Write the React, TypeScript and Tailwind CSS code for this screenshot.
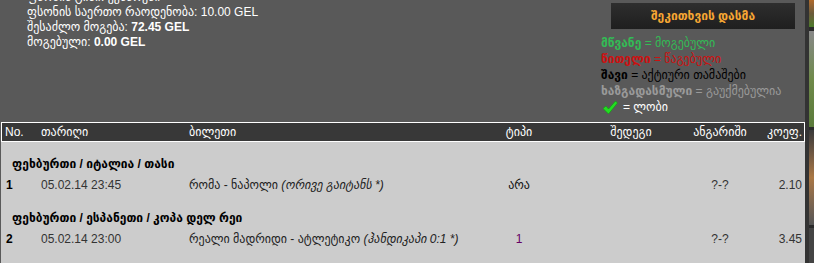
import React from "react";

const font = { fontFamily: '"Liberation Sans", "DejaVu Sans", Arial, sans-serif' };

function Row({ no, date, ticket, note, type, typeClass, score, coef }: { no: string; date: string; ticket: string; note: string; type: string; typeClass?: string; score: string; coef: string }) {
  return (
    <div className="grid grid-cols-[36px_148px_267px_126px_98px_80px_42px] pl-[4px] text-[12px] leading-[16px] text-[#111] mt-[5px]">
      <div className="pl-[1px] font-bold text-black">{no}</div>
      <div className="text-[#333]">{date}</div>
      <div className="whitespace-nowrap text-[#222]">
        {ticket} <span className="italic">({note})</span>
      </div>
      <div className={"text-center " + (typeClass ?? "")}>{type}</div>
      <div className="text-center"></div>
      <div className="text-center text-[#333]">{score}</div>
      <div className="text-right text-[#333]">{coef}</div>
    </div>
  );
}

export default function App() {
  return (
    <div className="flex w-[814px] h-[263px] overflow-hidden bg-[#595959]" style={font}>
      <div className="w-[805px] flex flex-col">
        <div className="flex h-[122px]">
          <div className="flex-1 pl-[27px] -mt-[10px] text-white text-[12px] leading-[15px]">
            <div>ფსონის ტიპი: ექსპრესი</div>
            <div>ფსონის საერთო რაოდენობა: 10.00 GEL</div>
            <div>
              შესაძლო მოგება: <b>72.45 GEL</b>
            </div>
            <div>
              მოგებული: <b>0.00 GEL</b>
            </div>
          </div>
          <div className="w-[204px] pt-[3px]">
            <div className="ml-[10px] w-[184px] h-[26px] flex items-center justify-center bg-gradient-to-b from-[#2e2e2e] to-[#1f1f1f] text-[#f7a733] font-bold text-[12px]">
              შეკითხვის დასმა
            </div>
            <div className="mt-[6px] text-[12px] leading-[16px]">
              <div className="text-[#33bb55]">
                <b>მწვანე</b> = მოგებული
              </div>
              <div className="text-[#cc1111]">
                <b>წითელი</b> = წაგებული
              </div>
              <div className="text-black">
                <b>შავი</b> = აქტიური თამაშები
              </div>
              <div className="text-[#9a9a9a]">
                <b>ხაზგადასმული</b> = გაუქმებულია
              </div>
              <div className="flex items-center text-white">
                <svg width="16" height="15" viewBox="0 0 16 15" className="ml-[1px] mr-[5px]">
                  <path d="M1 8.5 L4 6 L6.5 9 L13.5 1 L15.5 3 L6.5 14 Z" fill="#22dd22" stroke="#119911" strokeWidth="0.6" />
                </svg>
                = ლობი
              </div>
            </div>
          </div>
        </div>
        <div className="ml-px flex-1 flex flex-col">
          <div className="h-[20px] border border-white bg-[#383838] text-white text-[12px] leading-[18px] grid grid-cols-[36px_148px_267px_126px_98px_80px_42px] pl-[3px]">
            <div>No.</div>
            <div>თარიღი</div>
            <div>ბილეთი</div>
            <div className="text-center">ტიპი</div>
            <div className="text-center">შედეგი</div>
            <div className="text-center whitespace-nowrap">ანგარიში</div>
            <div className="text-right">კოეფ.</div>
          </div>
          <div className="flex-1 bg-[#cccccc]">
            <div className="pt-[14px]">
              <div className="pl-[11px] text-[12px] leading-[16px] font-bold text-black">ფეხბურთი / იტალია / თასი</div>
              <Row no="1" date="05.02.14 23:45" ticket="რომა - ნაპოლი" note="ორივე გაიტანს *" type="არა" score="?-?" coef="2.10" />
            </div>
            <div className="pt-[17px]">
              <div className="pl-[11px] text-[12px] leading-[16px] font-bold text-black">ფეხბურთი / ესპანეთი / კოპა დელ რეი</div>
              <Row no="2" date="05.02.14 23:00" ticket="რეალი მადრიდი - ატლეტიკო" note="ჰანდიკაპი 0:1 *" type="1" typeClass="text-[#660066]" score="?-?" coef="3.45" />
            </div>
          </div>
        </div>
      </div>
      <div className="flex-1 flex">
        <div className="w-[4px] bg-[#333333]" />
        <div className="flex-1 flex flex-col bg-[#2a2a2a]">
          <div className="h-[27px] bg-gradient-to-b from-[#b06a2a] via-[#6a5a3a] to-[#4a7a2a]" />
          <div className="h-[4px]" />
          <div className="h-[96px] bg-gradient-to-b from-[#888888] via-[#6f8a4a] to-[#5a7a3a]" />
          <div className="h-[3px]" />
          <div className="h-[95px] bg-gradient-to-b from-[#3a3a3a] via-[#aa7744] to-[#555555]" />
          <div className="flex-1 bg-[#444444] mt-[3px]" />
        </div>
      </div>
    </div>
  );
}
